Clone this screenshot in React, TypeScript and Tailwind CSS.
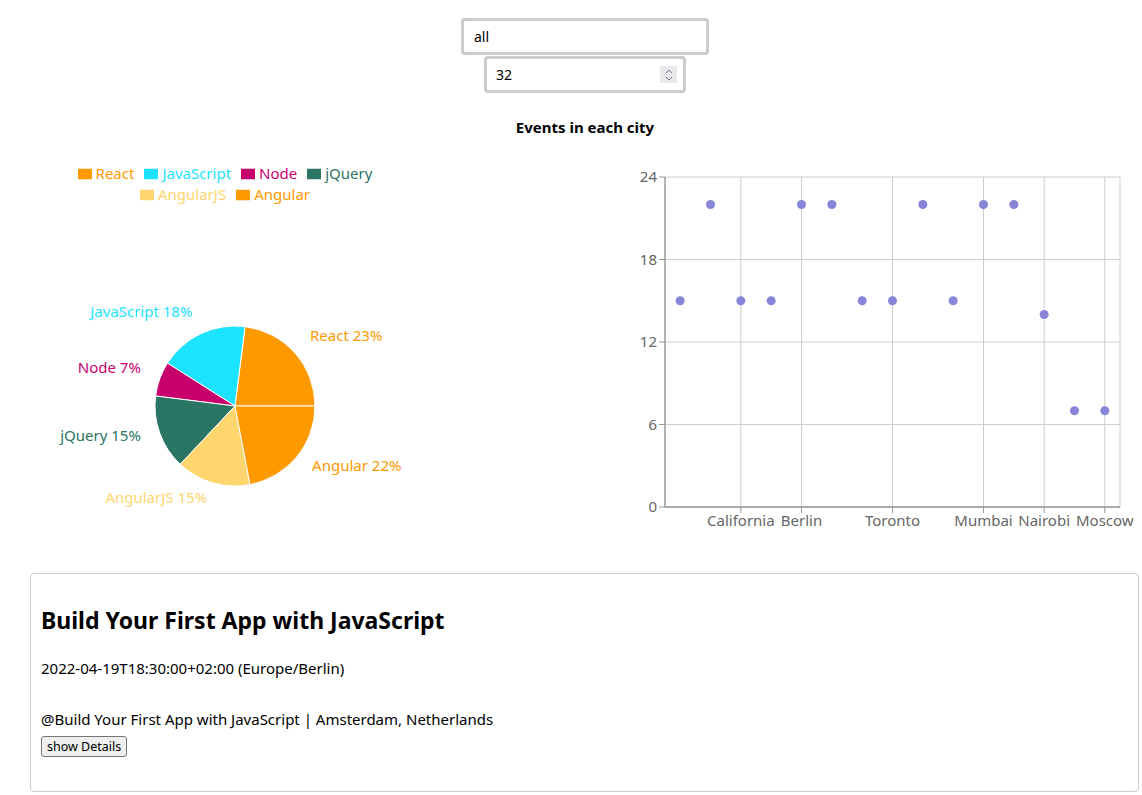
import { useState } from "react"

type Slice = {
  name: string
  value: number
  color: string
}

const slices: Slice[] = [
  { name: "React", value: 23, color: "#ff9900" },
  { name: "JavaScript", value: 18, color: "#1ce3ff" },
  { name: "Node", value: 7, color: "#c8006e" },
  { name: "jQuery", value: 15, color: "#2a7564" },
  { name: "AngularJS", value: 15, color: "#ffd66e" },
  { name: "Angular", value: 22, color: "#ff9900" },
]

const cityTicks = [
  { i: 2, name: "California" },
  { i: 4, name: "Berlin" },
  { i: 7, name: "Toronto" },
  { i: 10, name: "Mumbai" },
  { i: 12, name: "Nairobi" },
  { i: 14, name: "Moscow" },
]

const counts = [15, 22, 15, 15, 22, 22, 15, 15, 22, 15, 22, 22, 14, 7, 7]

// pie geometry, page coordinates
const cx = 235
const cy = 406
const r = 80

function polar(angle: number, radius: number) {
  const rad = (angle * Math.PI) / 180
  return { x: cx + radius * Math.cos(rad), y: cy - radius * Math.sin(rad) }
}

function PieChartBox() {
  const total = slices.reduce((s, d) => s + d.value, 0)
  let start = 0
  const parts = slices.map((d) => {
    const sweep = (d.value / total) * 360
    const a0 = start
    const a1 = start + sweep
    start = a1
    const p0 = polar(a0, r)
    const p1 = polar(a1, r)
    const large = sweep > 180 ? 1 : 0
    const path = `M${cx},${cy} L${p0.x},${p0.y} A${r},${r} 0 ${large} 0 ${p1.x},${p1.y} Z`
    const mid = (a0 + a1) / 2
    const lp = polar(mid, r + 20)
    return { ...d, path, lx: lp.x, ly: lp.y - 5, anchor: lp.x > cx ? "start" : "end" }
  })

  return (
    <div className="w-[571px] h-[390px] flex flex-col">
      {/* Legend */}
      <ul className="ml-[70px] w-[320px] pt-[13px] text-center text-[15px] leading-[21px]">
        {slices.map((d) => (
          <li key={d.name} className="inline-block mr-[10px]">
            <svg width="14" height="14" viewBox="0 0 32 32" className="inline-block align-middle mr-[4px] -mt-[2px]">
              <path d="M0,4h32v24h-32z" fill={d.color} />
            </svg>
            <span style={{ color: d.color }}>{d.name}</span>
          </li>
        ))}
      </ul>
      <svg width="571" height="335" viewBox="0 205 571 335" className="mt-auto">
        {parts.map((p) => (
          <path key={p.name} d={p.path} fill={p.color} stroke="#fff" strokeWidth="1" />
        ))}
        {parts.map((p) => (
          <text
            key={p.name + "-l"}
            x={p.lx}
            y={p.ly}
            fill={p.color}
            textAnchor={p.anchor}
            dominantBaseline="central"
            fontSize="15"
          >
            {p.name} {p.value}%
          </text>
        ))}
      </svg>
    </div>
  )
}

function ScatterChartBox() {
  const left = 665
  const right = 1120
  const top = 177
  const bottom = 507
  const band = (right - left) / counts.length
  const xOf = (i: number) => left + band * (i + 0.5)
  const yOf = (v: number) => bottom - (v / 24) * (bottom - top)
  const yTicks = [0, 6, 12, 18, 24]

  return (
    <svg width="571" height="390" viewBox="571 150 571 390" className="shrink-0">
      {/* grid */}
      {yTicks.map((t) => (
        <line key={t} x1={left} x2={right} y1={yOf(t)} y2={yOf(t)} stroke="#ccc" />
      ))}
      {cityTicks.map((c) => (
        <line key={c.name} x1={xOf(c.i)} x2={xOf(c.i)} y1={top} y2={bottom} stroke="#ccc" />
      ))}
      <line x1={right} x2={right} y1={top} y2={bottom} stroke="#ccc" />

      {/* y axis */}
      <line x1={left} x2={left} y1={top} y2={bottom} stroke="#999" strokeWidth="1.5" />
      {yTicks.map((t) => (
        <g key={"yt" + t}>
          <line x1={left - 6} x2={left} y1={yOf(t)} y2={yOf(t)} stroke="#999" />
          <text x={left - 8} y={yOf(t)} dy="0.355em" textAnchor="end" fill="#666" fontSize="15">
            {t}
          </text>
        </g>
      ))}

      {/* x axis */}
      <line x1={left} x2={right} y1={bottom} y2={bottom} stroke="#999" strokeWidth="1.5" />
      {cityTicks.map((c) => (
        <g key={"xt" + c.name}>
          <line x1={xOf(c.i)} x2={xOf(c.i)} y1={bottom} y2={bottom + 6} stroke="#999" />
          <text x={xOf(c.i)} y={bottom + 8} dy="0.71em" textAnchor="middle" fill="#666" fontSize="15">
            {c.name}
          </text>
        </g>
      ))}

      {counts.map((v, i) => (
        <circle key={i} cx={xOf(i)} cy={yOf(v)} r="4.5" fill="#8884d8" />
      ))}
    </svg>
  )
}

export default function App() {
  const [city, setCity] = useState("all")
  const [num, setNum] = useState("32")
  const [showDetails, setShowDetails] = useState(false)

  return (
    <div className="min-h-screen bg-white text-black font-['Noto_Sans',sans-serif]">
      {/* Search inputs */}
      <div className="flex flex-col items-center pt-[18px] pl-[28px]">
        <input
          value={city}
          onChange={(e) => setCity(e.target.value)}
          className="w-[248px] h-[37px] border-[3px] border-[#cccccc] rounded-[4px] px-[10px] text-[14px] outline-none"
        />
        <div className="relative mt-[1px]">
          <input
            type="number"
            value={num}
            onChange={(e) => setNum(e.target.value)}
            className="w-[202px] h-[37px] border-[3px] border-[#cccccc] rounded-[4px] px-[9px] text-[14px] outline-none [appearance:textfield] [&::-webkit-inner-spin-button]:appearance-none"
          />
          <div className="absolute right-[9px] top-[10px] w-[17px] h-[17px] bg-[#e9e9ed] flex flex-col items-center justify-center gap-[2px]">
            <svg width="8" height="5" viewBox="0 0 8 5">
              <path d="M1 4 L4 1 L7 4" stroke="#777" strokeWidth="1" fill="none" />
            </svg>
            <svg width="8" height="5" viewBox="0 0 8 5">
              <path d="M1 1 L4 4 L7 1" stroke="#777" strokeWidth="1" fill="none" />
            </svg>
          </div>
        </div>
      </div>

      {/* Charts */}
      <h4 className="pl-[28px] mt-[24px] text-center text-[15px] leading-[20px] font-bold">Events in each city</h4>
      <div className="flex mt-[13px]">
        <PieChartBox />
        <ScatterChartBox />
      </div>

      {/* Event card */}
      <div className="mt-[33px] ml-[30px] mr-[3px] border border-[#cccccc] rounded-[4px] px-[10px] pt-[10px] pb-[34px]">
        <h2 className="mt-[20px] text-[23px] leading-[32px] font-bold">Build Your First App with JavaScript</h2>
        <p className="mt-[20px] text-[15px] leading-[24px]">2022-04-19T18:30:00+02:00 (Europe/Berlin)</p>
        <p className="mt-[27px] text-[15px] leading-[24px]">@Build Your First App with JavaScript | Amsterdam, Netherlands</p>
        <button
          onClick={() => setShowDetails(!showDetails)}
          className="mt-[5px] h-[21px] px-[5px] text-[12.5px] leading-[17px] bg-[#efefef] border border-[#767676] rounded-[3px] font-['Noto_Sans',sans-serif]"
        >
          {showDetails ? "hide Details" : "show Details"}
        </button>
      </div>
    </div>
  )
}
